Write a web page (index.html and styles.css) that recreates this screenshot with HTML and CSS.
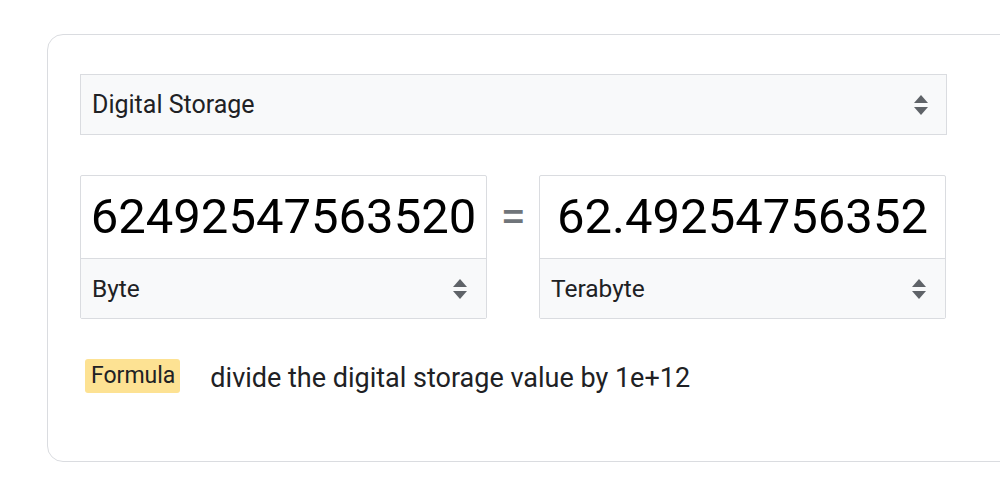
FILE: index.html
```html
<!DOCTYPE html>
<html lang="en">
<head>
<meta charset="utf-8">
<title>Unit converter</title>
<link rel="stylesheet" href="styles.css">
</head>
<body>
<div class="card">
  <div class="content">
    <div class="select select-top">
      <span>Digital Storage</span>
      <svg class="arrows" width="14" height="22" viewBox="0 0 14 22"><path d="M7 1 L14 9 H0 Z M0 13 H14 L7 21 Z" fill="#5f6368"/></svg>
    </div>
    <div class="row">
      <div class="box">
        <div class="value">62492547563520</div>
        <div class="select select-unit">
          <span>Byte</span>
          <svg class="arrows" width="14" height="22" viewBox="0 0 14 22"><path d="M7 1 L14 9 H0 Z M0 13 H14 L7 21 Z" fill="#5f6368"/></svg>
        </div>
      </div>
      <div class="equals">=</div>
      <div class="box">
        <div class="value">62.49254756352</div>
        <div class="select select-unit">
          <span>Terabyte</span>
          <svg class="arrows" width="14" height="22" viewBox="0 0 14 22"><path d="M7 1 L14 9 H0 Z M0 13 H14 L7 21 Z" fill="#5f6368"/></svg>
        </div>
      </div>
    </div>
    <div class="formula">
      <span class="badge">Formula</span>
      <span class="formula-text">divide the digital storage value by 1e+12</span>
    </div>
  </div>
</div>
</body>
</html>
```

FILE: styles.css
```css
html, body {
  margin: 0;
  padding: 0;
  overflow: hidden;
  background: #fff;
}
body {
  font-family: Roboto, "Liberation Sans", Arial, sans-serif;
  color: #202124;
}
.card {
  box-sizing: border-box;
  margin: 34px 0 0 47px;
  width: 1000px;
  height: 428px;
  border: 1px solid #dadce0;
  border-radius: 16px;
  padding: 39px 32px 0;
}
.content {
  width: 867px;
}
.select {
  box-sizing: border-box;
  display: flex;
  align-items: center;
  justify-content: space-between;
  background: #f8f9fa;
  color: #202124;
}
.select-top {
  height: 61px;
  border: 1px solid #dadce0;
  padding: 0 18px 0 11px;
  font-size: 25px;
}
.row {
  display: flex;
  align-items: flex-start;
  margin-top: 40px;
}
.box {
  box-sizing: border-box;
  width: 407px;
  height: 144px;
  border: 1px solid #dadce0;
  border-radius: 2px;
  display: flex;
  flex-direction: column;
}
.value {
  box-sizing: border-box;
  height: 83px;
  border-bottom: 1px solid #dadce0;
  font-size: 49px;
  line-height: 82px;
  text-align: center;
  color: #000;
  white-space: nowrap;
}
.select-unit {
  flex: 1;
  padding: 0 19px 0 11px;
  font-size: 24.5px;
}
.equals {
  width: 52px;
  text-align: center;
  font-size: 46px;
  line-height: 82px;
  color: #70757a;
}
.arrows {
  display: block;
}
.formula {
  display: flex;
  align-items: center;
  margin-top: 39px;
  padding-left: 5px;
}
.badge {
  background: #fde293;
  border-radius: 3px;
  font-size: 23px;
  line-height: 34px;
  padding: 0 5px 0 6px;
  color: #202124;
}
.formula-text {
  margin-left: 30px;
  padding-top: 4px;
  font-size: 27px;
  color: #202124;
}
```
